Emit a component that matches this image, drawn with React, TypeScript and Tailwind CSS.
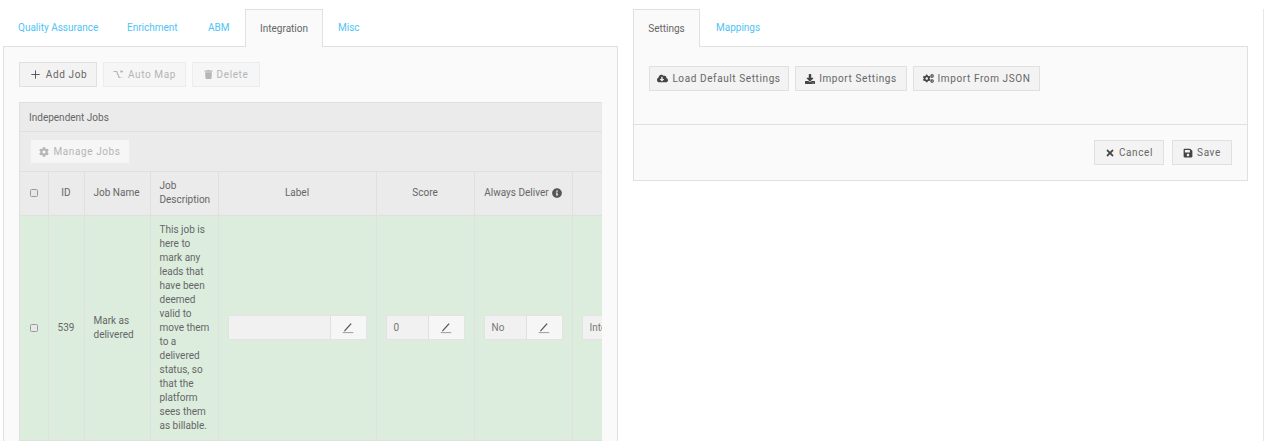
import React from 'react';
import { Plus } from 'lucide-react';
import { FaCloudDownloadAlt, FaCog, FaCogs, FaDownload, FaInfoCircle, FaSave, FaTimes, FaTrash } from 'react-icons/fa';

function PencilIcon() {
  return (
    <svg width="12" height="12" viewBox="0 0 12 12" className="text-[#555]">
      <path d="M2.4 8.2 8.6 1.2l1 .9-6.3 6.9-1.4.5z" fill="currentColor" />
      <path d="M.8 10.6h10.4" stroke="currentColor" strokeWidth="0.8" opacity="0.7" />
    </svg>
  );
}

function AutoMapIcon() {
  return (
    <svg width="11" height="10" viewBox="0 0 11 10" fill="none" stroke="currentColor" strokeWidth="1.2">
      <path d="M.5 1.5h3.2l2.4 6h1.6" />
      <path d="M8 1.5h2M8 .6v1.8M9.9 7.5v.2" strokeWidth="1.4" />
    </svg>
  );
}

function Btn({ icon, label, disabled, className = '' }: { icon: React.ReactNode; label: string; disabled?: boolean; className?: string }) {
  return (
    <button
      className={`flex h-[25px] items-center justify-center gap-[4px] border border-[#e0e0e0] bg-[#f3f3f3] text-[10px] tracking-[0.6px] ${
        disabled ? 'border-[#ececec] bg-[#f6f6f6] text-[#b5b5b5]' : 'text-[#666]'
      } ${className}`}
    >
      {icon}
      {label}
    </button>
  );
}

function EditField({ value, inputWidth, total }: { value: string; inputWidth: string; total: string }) {
  return (
    <div className={`flex h-[25px] border border-[#e3e3e3] bg-[#f1f1f1] ${total}`}>
      <div className={`flex items-center border-r border-[#e0e0e0] pl-[7px] text-[10px] text-[#777] ${inputWidth}`}>{value}</div>
      <div className="flex flex-1 items-center justify-center bg-[#f6f6f6]">
        <PencilIcon />
      </div>
    </div>
  );
}

const thClass = 'border-r border-b border-[#e0e0e0] font-normal text-[10px] leading-[14px] text-[#666]';
const tdClass = 'border-r border-b border-[#e0e0e0] align-middle text-[10px] leading-[14px] text-[#666]';

function Checkbox() {
  return <span className="mx-auto block h-[8px] w-[8px] rounded-[1.5px] border border-[#999] bg-[#e8e8e8]" />;
}

const leftTabs = ['Quality Assurance', 'Enrichment', 'ABM', 'Integration', 'Misc'];

function Tab({ label, active, className = '' }: { label: string; active?: boolean; className?: string }) {
  return (
    <div
      className={`relative flex h-[37px] items-center text-[10px] ${className} ${
        active
          ? 'z-10 -mb-px h-[38px] border border-b-0 border-[#e0e0e0] bg-[#fafafa] text-[#666]'
          : 'text-[#4fc3f7]'
      }`}
    >
      {label}
    </div>
  );
}

export default function App() {
  return (
    <div className="flex h-[441px] overflow-hidden bg-white pt-[9px] font-['Roboto',sans-serif]">
      <div className="ml-[3px] w-[615px] shrink-0">
        <div className="flex pl-[15px]">
          <Tab label={leftTabs[0]} className="w-[109px]" />
          <Tab label={leftTabs[1]} className="w-[81px]" />
          <Tab label={leftTabs[2]} className="w-[37px]" />
          <Tab label={leftTabs[3]} active className="w-[78px] justify-center" />
          <Tab label={leftTabs[4]} className="pl-[15px]" />
        </div>
        <div className="h-[400px] border border-[#e0e0e0] bg-[#fafafa] pt-[15px] pl-[15px]">
          <div className="flex gap-[6px]">
            <Btn icon={<Plus size={13} strokeWidth={1.6} className="text-[#444]" />} label="Add Job" className="w-[78px]" />
            <Btn icon={<AutoMapIcon />} label="Auto Map" disabled className="w-[83px]" />
            <Btn icon={<FaTrash size={9} />} label="Delete" disabled className="w-[68px]" />
          </div>
          <div className="mt-[15px] w-[583px] overflow-hidden border-l border-[#e0e0e0]">
            <div className="flex h-[30px] items-center border-y border-[#e0e0e0] bg-[#ebebeb] pl-[9px] text-[10px] text-[#666]">
              Independent Jobs
            </div>
            <div className="flex h-[40px] items-center border-b border-[#e0e0e0] bg-[#ebebeb] pl-[10px]">
              <Btn icon={<FaCog size={10} />} label="Manage Jobs" disabled className="w-[100px]" />
            </div>
            <table className="w-[640px] table-fixed border-collapse">
              <colgroup>
                <col className="w-[28px]" />
                <col className="w-[36px]" />
                <col className="w-[66px]" />
                <col className="w-[68px]" />
                <col className="w-[158px]" />
                <col className="w-[98px]" />
                <col className="w-[98px]" />
                <col className="w-[88px]" />
              </colgroup>
              <thead>
                <tr className="h-[43px] bg-[#ebebeb]">
                  <th className={thClass}>
                    <Checkbox />
                  </th>
                  <th className={thClass}>ID</th>
                  <th className={`${thClass} pl-[9px] text-left`}>Job Name</th>
                  <th className={`${thClass} pl-[9px] text-left`}>
                    Job
                    <br />
                    Description
                  </th>
                  <th className={thClass}>Label</th>
                  <th className={thClass}>Score</th>
                  <th className={thClass}>
                    <span className="inline-flex items-center gap-[3px]">
                      Always Deliver
                      <FaInfoCircle size={10} className="text-[#555]" />
                    </span>
                  </th>
                  <th className={thClass} />
                </tr>
              </thead>
              <tbody>
                <tr className="h-[225px] bg-[#dcedde]">
                  <td className={tdClass}>
                    <Checkbox />
                  </td>
                  <td className={`${tdClass} text-center`}>539</td>
                  <td className={`${tdClass} pl-[9px]`}>
                    Mark as
                    <br />
                    delivered
                  </td>
                  <td className={`${tdClass} py-[7px] pl-[9px] pr-[6px]`}>
                    This job is here to mark any leads that have been deemed valid to move them to a delivered status, so that the platform sees them as billable.
                  </td>
                  <td className={`${tdClass} pl-[9px]`}>
                    <EditField value="" inputWidth="w-[102px]" total="w-[139px]" />
                  </td>
                  <td className={`${tdClass} pl-[9px]`}>
                    <EditField value="0" inputWidth="w-[42px]" total="w-[79px]" />
                  </td>
                  <td className={`${tdClass} pl-[9px]`}>
                    <EditField value="No" inputWidth="w-[42px]" total="w-[79px]" />
                  </td>
                  <td className={`${tdClass} pl-[9px]`}>
                    <EditField value="Integration" inputWidth="w-[60px]" total="w-[79px]" />
                  </td>
                </tr>
              </tbody>
            </table>
          </div>
        </div>
      </div>

      <div className="ml-[15px] w-[615px] shrink-0">
        <div className="flex">
          <Tab label="Settings" active className="w-[67px] justify-center" />
          <Tab label="Mappings" className="pl-[16px]" />
        </div>
        <div className="border border-[#e0e0e0] bg-[#fafafa]">
          <div className="flex h-[78px] gap-[6px] border-b border-[#e0e0e0] pt-[19px] pl-[15px]">
            <Btn icon={<FaCloudDownloadAlt size={11} className="text-[#444]" />} label="Load Default Settings" className="w-[140px]" />
            <Btn icon={<FaDownload size={10} className="text-[#444]" />} label="Import Settings" className="w-[112px]" />
            <Btn icon={<FaCogs size={11} className="text-[#444]" />} label="Import From JSON" className="w-[127px]" />
          </div>
          <div className="flex h-[55px] items-center justify-end gap-[8px] pr-[15px]">
            <Btn icon={<FaTimes size={10} className="text-[#444]" />} label="Cancel" className="w-[70px]" />
            <Btn icon={<FaSave size={10} className="text-[#444]" />} label="Save" className="w-[60px]" />
          </div>
        </div>
      </div>

      <div className="ml-auto h-full w-px bg-[#e8e8e8]" />
    </div>
  );
}
